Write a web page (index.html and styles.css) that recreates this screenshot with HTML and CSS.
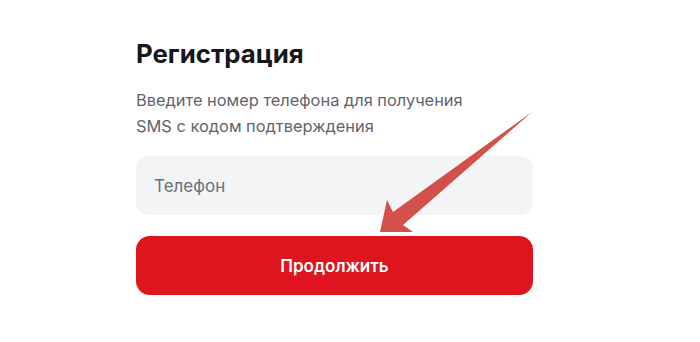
FILE: index.html
```html
<!DOCTYPE html>
<html lang="ru">
<head>
<meta charset="utf-8">
<link rel="stylesheet" href="styles.css">
</head>
<body>
<main class="page">
  <section class="card">
    <h1 class="title">Регистрация</h1>
    <p class="lead">Введите номер телефона для получения<br>SMS с кодом подтверждения</p>
    <div class="field">Телефон</div>
    <button class="btn">Продолжить</button>
  </section>
  <svg class="arrow" width="700" height="342" viewBox="0 0 700 342">
    <polygon points="532,112 403,225 413,232 380,232 387,200 393,212" fill="#d24f4a"/>
  </svg>
</main>
</body>
</html>
```
FILE: styles.css
```css
* { box-sizing: border-box; }
html, body { margin: 0; padding: 0; background: #fff; }
body { font-family: Inter, "Noto Sans", sans-serif; }
.page { position: relative; width: 700px; height: 342px; }
.card { width: 397px; margin-left: 136px; padding-top: 38px; display: flex; flex-direction: column; }
.title { margin: 0; font-size: 25.8px; font-weight: 700; color: #15171a; line-height: 32px; letter-spacing: 0; }
.lead { margin: 17px 0 0; font-size: 16.4px; line-height: 26px; color: #5f646b; }
.field { margin-top: 17px; height: 59px; border-radius: 12px; background: #f3f4f6; padding-left: 18px; display: flex; align-items: center; font-size: 17px; color: #6b7079; }
.btn { margin-top: 21px; height: 59px; border: 0; border-radius: 14px; background: #de141e; color: #fff; font-family: inherit; font-size: 17px; font-weight: 600; }
.arrow { position: absolute; left: 0; top: 0; }
```
